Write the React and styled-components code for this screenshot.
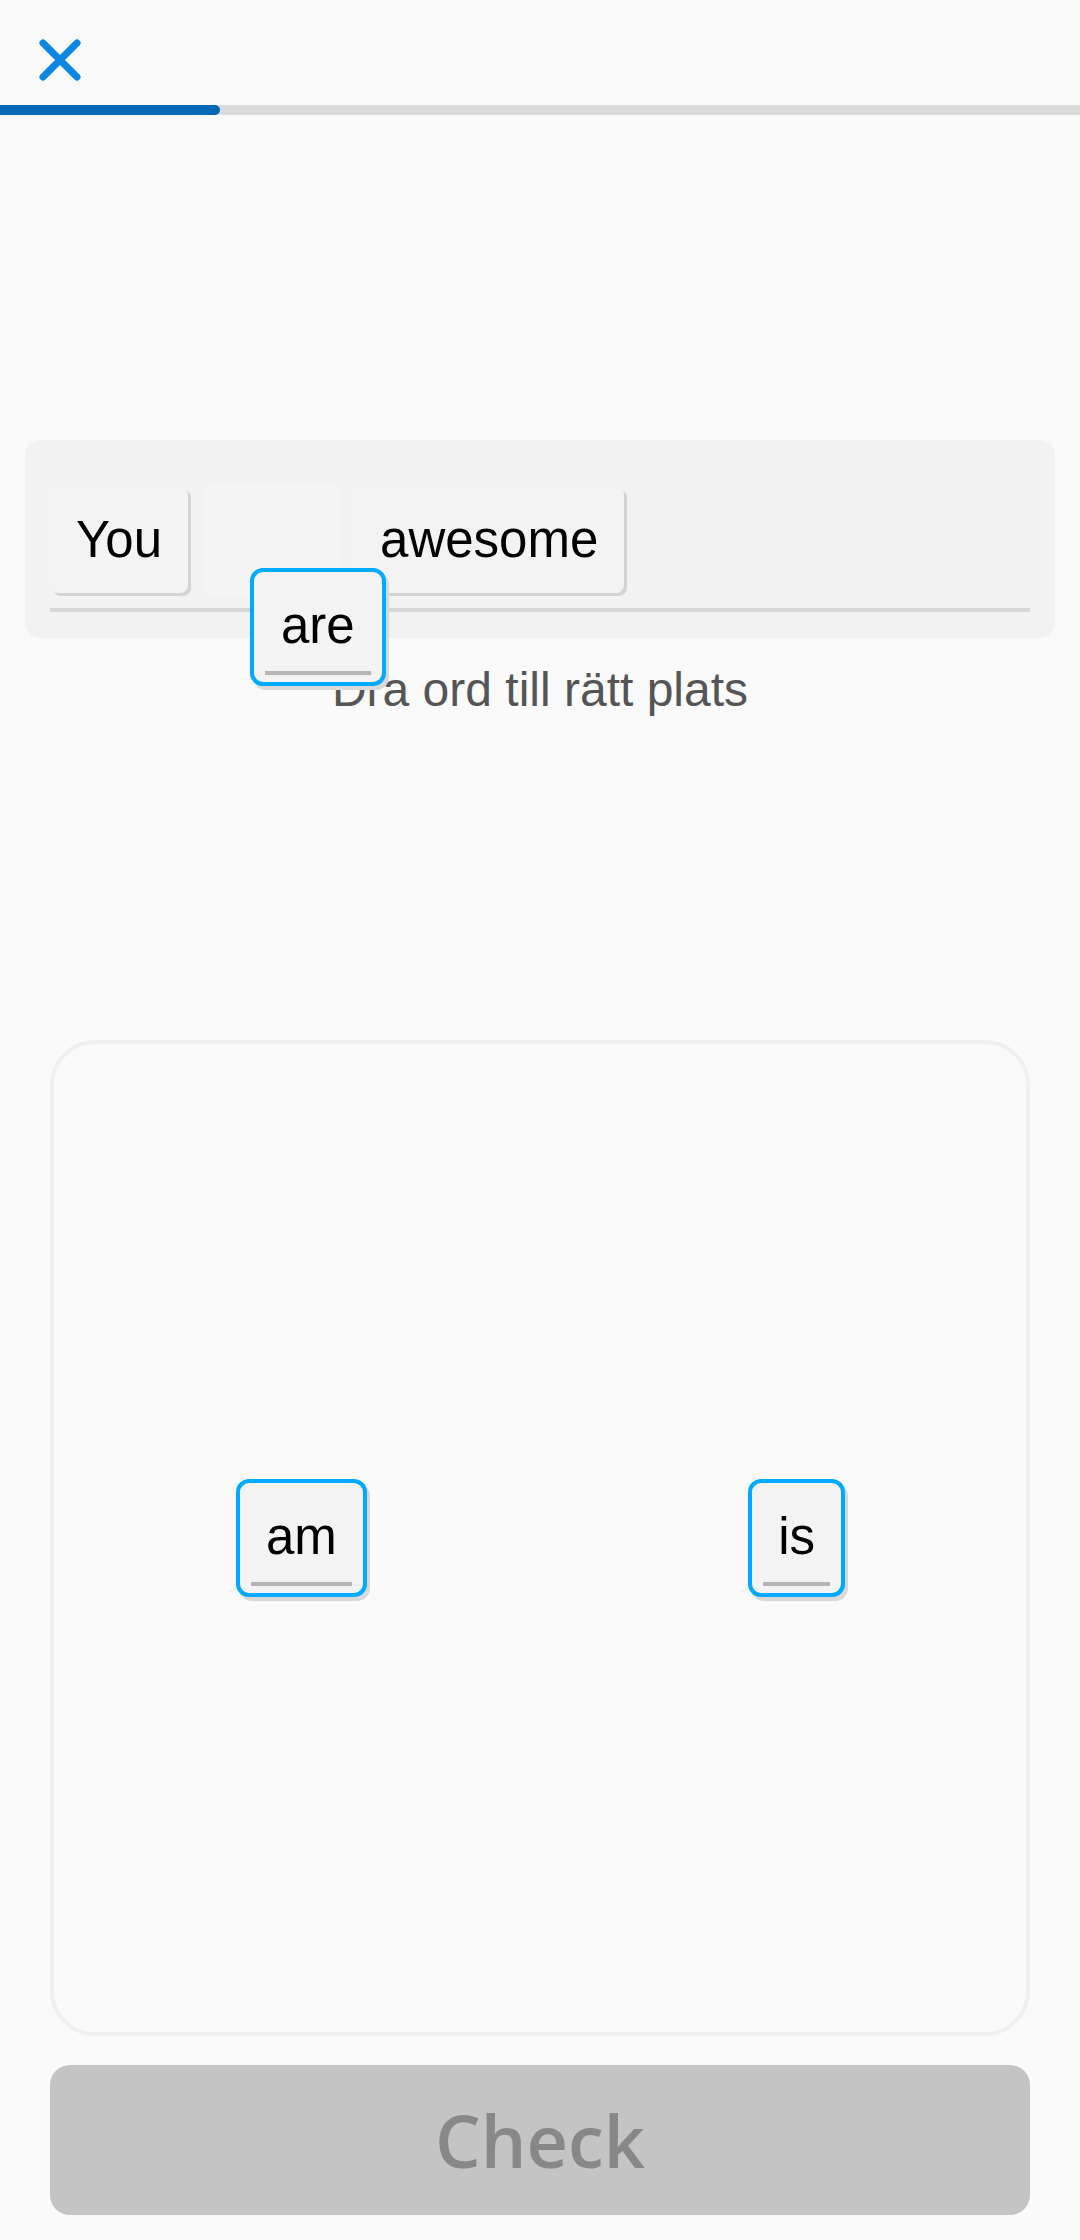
import React from "react";
import { styled, createGlobalStyle } from "styled-components";

const GlobalStyle = createGlobalStyle`
  html, body {
    margin: 0;
    padding: 0;
    background: #fafafa;
  }
  * {
    box-sizing: border-box;
  }
`;

const sentence = [
  { word: "You" },
  { slot: true },
  { word: "awesome" },
];

const bank = ["am", "is"];

function CloseIcon() {
  return (
    <svg width="44" height="44" viewBox="0 0 44 44" fill="none">
      <path
        d="M5 5 L39 39 M39 5 L5 39"
        stroke="#0a87e3"
        strokeWidth="7"
        strokeLinecap="round"
      />
    </svg>
  );
}

function App() {
  const progress = 220 / 1080;
  return (
    <>
      <GlobalStyle />
      <Page>
        <TopBar>
          <CloseButton aria-label="Stäng">
            <CloseIcon />
          </CloseButton>
        </TopBar>
        <Progress>
          <ProgressFill style={{ width: `${progress * 100}%` }} />
        </Progress>

        <SentenceBox>
          <SentenceRow>
            {sentence.map((item, i) =>
              item.slot ? (
                <Slot key={i} />
              ) : (
                <Tile key={i}>{item.word}</Tile>
              )
            )}
          </SentenceRow>
          <Line />
          <DraggedTile>are</DraggedTile>
        </SentenceBox>

        <Hint>Dra ord till rätt plats</Hint>

        <WordBank>
          {bank.map((w) => (
            <BankTile key={w}>{w}</BankTile>
          ))}
        </WordBank>

        <CheckButton disabled>Check</CheckButton>
      </Page>
    </>
  );
}

const Page = styled.div`
  min-height: 2240px;
  background: #fafafa;
  display: flex;
  flex-direction: column;
  font-family: "Liberation Sans", Arial, sans-serif;
`;

const TopBar = styled.div`
  height: 105px;
  padding: 38px 0 0 38px;
`;

const CloseButton = styled.button`
  display: block;
  width: 44px;
  height: 44px;
  padding: 0;
  border: none;
  background: none;
`;

const Progress = styled.div`
  height: 10px;
  background: #dadada;
`;

const ProgressFill = styled.div`
  height: 100%;
  background: #0068b4;
  border-radius: 0 5px 5px 0;
`;

const SentenceBox = styled.div`
  position: relative;
  margin: 325px 25px 0;
  padding: 42px 25px 26px;
  background: #f2f2f2;
  border-radius: 15px;
`;

const SentenceRow = styled.div`
  display: flex;
  align-items: center;
  gap: 15px;
  height: 116px;
`;

const Tile = styled.div`
  padding: 25px 26px;
  font-size: 51px;
  line-height: 56px;
  color: #000;
  background: #f3f3f3;
  border-radius: 8px;
  box-shadow: 3px 3px 0 #d4d4d4;
`;

const Slot = styled.div`
  width: 136px;
  height: 116px;
  background: #f4f4f4;
  border-radius: 10px;
`;

const Line = styled.div`
  height: 4px;
  margin-top: 10px;
  background: #d6d6d6;
`;

const BankTile = styled.div`
  position: relative;
  padding: 26px 26px 28px;
  font-size: 51px;
  line-height: 56px;
  color: #000;
  background: #f3f3f3;
  border: 4px solid #00aaff;
  border-radius: 13px;
  box-shadow: 3px 4px 0 #d8d8d8;

  &::after {
    content: "";
    position: absolute;
    left: 11px;
    right: 11px;
    bottom: 7px;
    height: 4px;
    background: #b5b5b5;
  }
`;

const DraggedTile = styled(BankTile)`
  position: absolute;
  left: 225px;
  top: 128px;
  padding: 26px 27px 28px;
`;

const Hint = styled.p`
  margin: 24px 0 0;
  text-align: center;
  font-size: 48px;
  line-height: 56px;
  color: #555555;
`;

const WordBank = styled.div`
  margin: 322px 50px 0;
  height: 996px;
  border: 4px solid #f0f0f0;
  border-radius: 45px;
  display: flex;
  align-items: center;
  justify-content: space-between;
  padding: 0 181px 0 182px;
`;

const CheckButton = styled.button`
  margin: 29px 50px 0;
  height: 150px;
  border: none;
  border-radius: 20px;
  background: #c4c4c4;
  color: #888888;
  font-family: "Open Sans", sans-serif;
  font-weight: 600;
  font-size: 72px;
  padding: 0;
`;

export default App;
